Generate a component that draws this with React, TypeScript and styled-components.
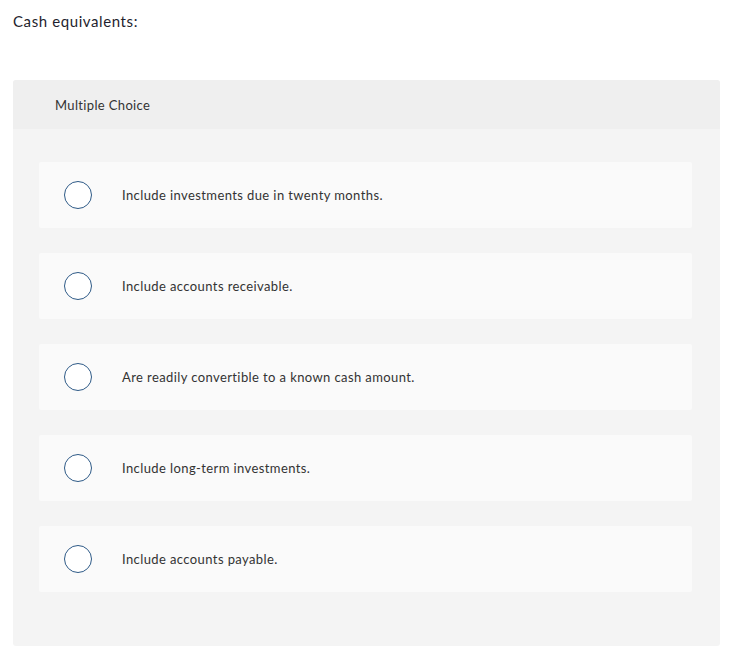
import styled, { createGlobalStyle } from "styled-components"

const GlobalStyle = createGlobalStyle`
    body {
        margin: 0;
        background: #ffffff;
        font-family: Lato, "Open Sans", Arial, sans-serif;
    }
`

const Page = styled.div`
    padding: 12px 16px 20px 13px;
`

const Question = styled.div`
    color: #1f1f2e;
    font-size: 15px;
    line-height: 18px;
    letter-spacing: 0.6px;
    margin-bottom: 50px;
`

const Panel = styled.div`
    background: #f4f4f4;
    border-radius: 3px;
    overflow: hidden;
`

const PanelHeader = styled.div`
    background: #efefef;
    height: 49px;
    display: flex;
    align-items: center;
    padding-left: 42px;
    color: #333333;
    font-size: 13px;
    letter-spacing: 0.35px;
`

const Options = styled.div`
    display: flex;
    flex-direction: column;
    gap: 25px;
    padding: 33px 28px 54px 26px;
`

const Option = styled.label`
    display: flex;
    align-items: center;
    height: 66px;
    background: #fafafa;
    border-radius: 2px;
    padding-left: 25px;
    cursor: pointer;
`

const Radio = styled.span`
    width: 26px;
    height: 26px;
    border: 1.5px solid #2e5a87;
    border-radius: 50%;
    background: #ffffff;
    flex-shrink: 0;
`

const OptionText = styled.span`
    margin-left: 30px;
    color: #333333;
    font-size: 13px;
    letter-spacing: 0.4px;
`

const choices = [
    "Include investments due in twenty months.",
    "Include accounts receivable.",
    "Are readily convertible to a known cash amount.",
    "Include long-term investments.",
    "Include accounts payable.",
]

const App = () => {
    return (
        <Page>
            <GlobalStyle />
            <Question>Cash equivalents:</Question>
            <Panel>
                <PanelHeader>Multiple Choice</PanelHeader>
                <Options>
                    {choices.map((c) => (
                        <Option key={c}>
                            <Radio />
                            <OptionText>{c}</OptionText>
                        </Option>
                    ))}
                </Options>
            </Panel>
        </Page>
    )
}

export default App
